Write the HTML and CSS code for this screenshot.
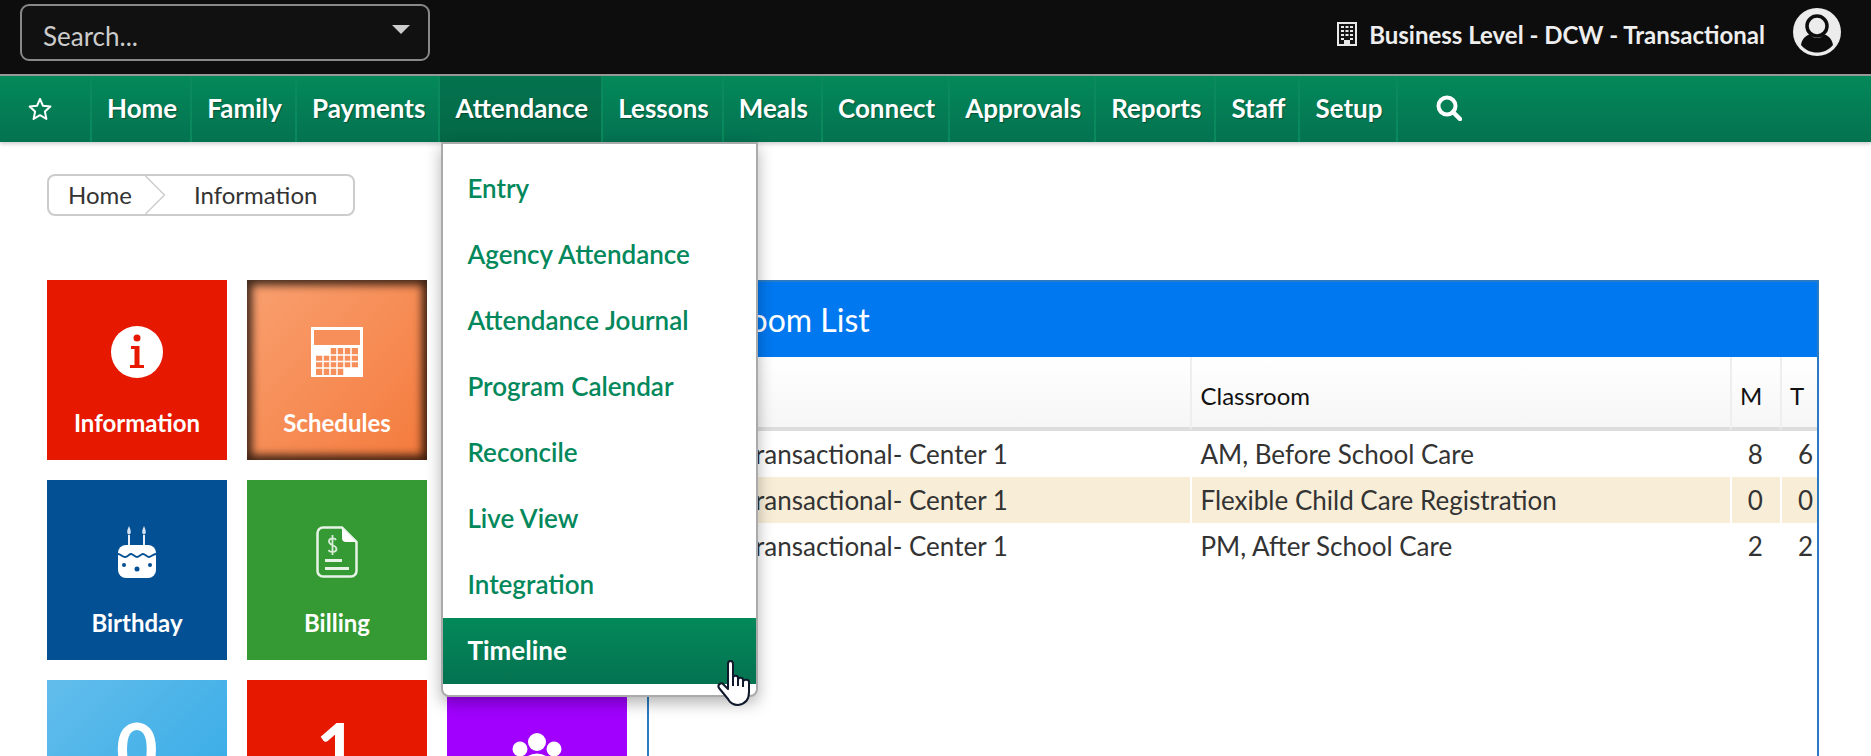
FILE: index.html
```html
<!DOCTYPE html>
<html lang="en">
<head>
<meta charset="utf-8">
<title>Information</title>
<link rel="stylesheet" href="styles.css">
</head>
<body>
<header class="topbar">
  <div class="search"><span>Search...</span><i class="caret"></i></div>
  <div class="account">
    <svg class="building" viewBox="0 0 20 24"><rect x="1" y="1" width="18" height="22" fill="#141414" stroke="#e8e8e8" stroke-width="2"/><g fill="#e8e8e8"><rect x="4" y="4" width="3" height="2"/><rect x="8.500" y="4" width="3" height="2"/><rect x="13" y="4" width="3" height="2"/><rect x="4" y="8" width="3" height="2"/><rect x="8.500" y="8" width="3" height="2"/><rect x="13" y="8" width="3" height="2"/><rect x="4" y="12" width="3" height="2"/><rect x="8.500" y="12" width="3" height="2"/><rect x="13" y="12" width="3" height="2"/><rect x="4" y="16" width="3" height="2"/><rect x="13" y="16" width="3" height="2"/><rect x="7" y="18" width="6" height="5"/></g></svg>
    <span class="biz">Business Level - DCW - Transactional</span>
    <svg class="avatar" viewBox="0 0 48 48"><circle cx="24" cy="24" r="24" fill="#ececec"/><circle cx="24" cy="18" r="10" fill="#ececec" stroke="#0d0d0d" stroke-width="3.500"/><path d="M8 37c1-7 6-10 9-10.500 2 2.500 4.500 3.500 7 3.500s5-1 7-3.500c3 .5 8 3.500 9 10.500-4 5-10 7.500-16 7.500S12 42 8 37z" fill="#0d0d0d"/></svg>
  </div>
</header>
<nav class="nav">
  <a class="nav-item star-item"><svg class="star" viewBox="0 0 24 24"><path d="M12 2l3 6.800 7.400.8-5.500 5 1.500 7.300L12 18.200 5.600 21.900l1.500-7.300-5.500-5 7.400-.8z" fill="none" stroke="#fff" stroke-width="2" stroke-linejoin="round"/></svg></a>
  <a class="nav-item">Home</a>
  <a class="nav-item">Family</a>
  <a class="nav-item">Payments</a>
  <div class="nav-item active">Attendance
    <ul class="menu">
      <li>Entry</li>
      <li>Agency Attendance</li>
      <li>Attendance Journal</li>
      <li>Program Calendar</li>
      <li>Reconcile</li>
      <li>Live View</li>
      <li>Integration</li>
      <li class="hot">Timeline</li>
    </ul>
  </div>
  <a class="nav-item">Lessons</a>
  <a class="nav-item">Meals</a>
  <a class="nav-item">Connect</a>
  <a class="nav-item">Approvals</a>
  <a class="nav-item">Reports</a>
  <a class="nav-item">Staff</a>
  <a class="nav-item">Setup</a>
  <a class="nav-item search-item"><svg class="glass" viewBox="0 0 26 26"><circle cx="11" cy="11" r="8.500" fill="none" stroke="#fff" stroke-width="4"/><path d="M17 17l7 7" stroke="#fff" stroke-width="4.500" stroke-linecap="round"/></svg></a>
</nav>
<main class="content">
  <div class="crumbs">
    <span class="crumb-home">Home</span>
    <svg class="crumb-sep" viewBox="0 0 20 40"><path d="M0 0l20 20L0 40" fill="none" stroke="#ccc" stroke-width="1.500"/></svg>
    <span class="crumb-info">Information</span>
  </div>
  <div class="columns">
    <div class="tiles">
      <div class="tile red">
        <svg class="icon" viewBox="0 0 52 52"><circle cx="26" cy="26" r="26" fill="#fff"/><circle cx="26" cy="12" r="3.500" fill="#e61900"/><path d="M20 20h8.500v19H33v3H19v-3h4.500V23H20z" fill="#e61900"/></svg>
        <span class="label">Information</span>
      </div>
      <div class="tile orange">
        <svg class="icon" viewBox="0 0 52 52"><rect y="1" width="52" height="50" fill="#fff"/><rect x="3" y="4" width="46" height="15" fill="#f78f5a"/><path d="M19 22h28v20H33v7H5V29h14z" fill="#f78f5a"/><path d="M5 29h42M5 35.500h42M5 42h42M12 29v20M19 22v27M26 22v27M33 22v27M40 22v20" fill="none" stroke="#fff" stroke-width="1.500"/></svg>
        <span class="label">Schedules</span>
      </div>
      <div class="tile spacer"></div>
      <div class="tile blue">
        <svg class="icon" viewBox="0 0 40 52"><path d="M12 0c1.300 3 1.800 4.500 1.800 6s-.8 2.500-1.800 2.500-1.800-1-1.800-2.500.5-3 1.800-6zM27 0c1.300 3 1.800 4.500 1.800 6s-.8 2.500-1.800 2.500-1.800-1-1.800-2.500.5-3 1.800-6z" fill="#d5e2ef"/><path d="M11 9h2v11h-2zM26 9h2v11h-2z" fill="#e8eff6"/><rect x="1" y="19" width="38" height="33" rx="8" fill="#fff"/><path d="M1 28c3 0 4 3 7 3s4-3 6-3 4 3 6 3 4-3 6-3 4 3 6 3 4-3 7-3" fill="none" stroke="#045094" stroke-width="1.800"/><circle cx="20" cy="43" r="2.500" fill="#045094"/><circle cx="7" cy="39" r="2" fill="#045094"/><circle cx="33" cy="39" r="2" fill="#045094"/></svg>
        <span class="label">Birthday</span>
      </div>
      <div class="tile green">
        <svg class="icon" viewBox="0 0 42 52"><path d="M26 1.500H7c-3 0-5.500 2.500-5.500 5.500v38c0 3 2.500 5.500 5.500 5.500h28c3 0 5.500-2.500 5.500-5.500V16z" fill="none" stroke="#e8f3e8" stroke-width="2.500"/><path d="M26 2l14 14H30c-2.500 0-4-1.500-4-4z" fill="#fff"/><path d="M20 14c-1-2-7-2.500-7 1.500 0 4.500 7.500 3 7.500 7.500 0 4-7 3.500-8 1M16.500 9v20" fill="none" stroke="#d8ecd8" stroke-width="1.800"/><path d="M9 33h17v3H9zM9 41h24v3H9z" fill="#e8f3e8"/></svg>
        <span class="label">Billing</span>
      </div>
      <div class="tile spacer"></div>
      <div class="tile sky"><span class="count">0</span></div>
      <div class="tile red"><span class="count">1</span></div>
      <div class="tile purple">
        <svg class="paw" viewBox="0 0 52 40"><circle cx="9" cy="16" r="7.500" fill="#fff"/><circle cx="26" cy="9" r="9" fill="#fff"/><circle cx="43" cy="16" r="7.500" fill="#fff"/><ellipse cx="26" cy="32" rx="13" ry="10" fill="none" stroke="#fff" stroke-width="3"/></svg>
      </div>
    </div>
    <section class="panel">
      <h2 class="panel-title">Classroom List</h2>
      <table class="grid">
        <thead>
          <tr><th class="c-center"></th><th class="c-room">Classroom</th><th class="c-day">M</th><th class="c-day">T</th></tr>
        </thead>
        <tbody>
          <tr><td>DCW Transactional- Center 1</td><td>AM, Before School Care</td><td class="num">8</td><td class="num">6</td></tr>
          <tr class="alt"><td>DCW Transactional- Center 1</td><td>Flexible Child Care Registration</td><td class="num">0</td><td class="num">0</td></tr>
          <tr><td>DCW Transactional- Center 1</td><td>PM, After School Care</td><td class="num">2</td><td class="num">2</td></tr>
        </tbody>
      </table>
    </section>
  </div>
</main>
<svg class="cursor" viewBox="0 0 34 46"><path d="M11 4c0-4 5-4 5 0v14c0-3 5-3 5 0v2c0-3 5-3 5 0v2c0-3 6-3 6 0v10c0 7-3 12-11 13-5 0-8-2-10-6L2 28c-2-3 2-6 4-4l5 5z" fill="#fff" stroke="#111a2c" stroke-width="2" stroke-linejoin="round"/><path d="M16 17v9M21 19v7M26 21v6" stroke="#111a2c" stroke-width="2"/></svg>
</body>
</html>
```

FILE: styles.css
```css
* { box-sizing: border-box; }
html, body { margin: 0; height: 756px; overflow: hidden; background: #fff; }
body { font-family: Lato, "Noto Sans", sans-serif; color: #333; position: relative; }

.topbar { height: 76px; background: #0d0d0d; border-bottom: 2px solid #999; display: flex; justify-content: space-between; padding: 4px 30px 0 20px; }
.search { width: 410px; height: 57px; background: #111; border: 2px solid #888; border-radius: 9px; display: flex; align-items: center; justify-content: space-between; padding: 7px 18px 0 21px; color: #ccc; font-size: 26px; }
.caret { width: 0; height: 0; border: 9px solid transparent; border-top: 9px solid #ccc; border-bottom: 0; margin-top: -13px; }
.account { display: flex; align-items: center; height: 56px; color: #eee; }
.building { width: 20px; height: 24px; margin-top: 4px; }
.biz { font-size: 24px; font-weight: 700; margin: 4px 28px 0 12px; }
.avatar { width: 48px; height: 48px; }

.nav { height: 66px; display: flex; background: linear-gradient(#03895a, #047250); box-shadow: 0 2px 4px rgba(0,0,0,.2); color: #fff; font-size: 26px; font-weight: 700; text-shadow: 1px 1px 1px rgba(0,0,0,.35); position: relative; }
.nav-item { display: flex; align-items: center; padding: 0 13px 3px 15px; border-right: 2px solid #0a8a5c; height: 66px; position: relative; }
.star-item { width: 92px; padding: 0 0 0 28px; }
.star { width: 24px; height: 24px; }
.active { background: linear-gradient(#04724e, #046846); }
.search-item { border-right: 0; padding-left: 38px; }
.glass { width: 26px; height: 26px; }

.menu { position: absolute; left: 1px; top: 66px; width: 317px; height: 555px; margin: 0; padding: 12px 0 0; list-style: none; background: #fff; border: 2px solid #aaa; border-radius: 0 0 8px 8px; box-shadow: 0 6px 16px rgba(0,0,0,.3); z-index: 5; color: #03885c; font-size: 26px; font-weight: 600; text-shadow: none; }
.menu li { height: 66px; display: flex; align-items: center; padding: 0 0 3px 24px; }
.menu .hot { background: linear-gradient(#03895a, #047250); color: #fff; font-weight: 700; padding-bottom: 2px; }

.content { padding: 32px 52px 0 47px; }
.crumbs { display: flex; align-items: center; width: 308px; height: 42px; padding-bottom: 1px; border: 2px solid #ccc; border-radius: 8px; font-size: 24px; color: #333; }
.crumb-home { padding-left: 19px; width: 96px; }
.crumb-sep { width: 20px; height: 38px; }
.crumb-info { padding-left: 29px; }

.columns { display: flex; gap: 20px; margin-top: 64px; }
.tiles { display: grid; grid-template-columns: repeat(3, 180px); grid-auto-rows: 180px; gap: 20px; flex: none; }
.tile { display: flex; flex-direction: column; align-items: center; padding-top: 46px; color: #fff; overflow: hidden; }
.red { background: #e61900; }
.orange { background: linear-gradient(135deg, #f9a070, #f47a3c); box-shadow: inset 0 0 8px 5px rgba(0,0,0,.75); }
.blue { background: #045094; }
.green { background: #359a34; }
.sky { background: linear-gradient(135deg, #62bdeb, #2fa8e6); }
.purple { background: #a100ff; padding-top: 53px; }
.spacer { background: transparent; }
.icon { height: 52px; width: 52px; flex: none; }
.label { font-size: 24px; font-weight: 700; line-height: 30px; margin-top: 30px; }
.count { font-size: 72px; font-weight: 700; line-height: 1; margin-top: -14px; }
.paw { width: 52px; height: 40px; }

.panel { flex: 1; min-width: 0; height: 500px; border: 2px solid #2a7bc4; border-bottom: 0; overflow: hidden; }
.panel-title { background: #0078f0; color: #fff; font-size: 32px; font-weight: 400; line-height: 79px; padding-left: 19px; margin: -2px -2px 0; height: 77px; }
.grid { border-collapse: separate; border-spacing: 0; table-layout: fixed; width: 1181px; font-size: 26px; color: #333; }
.grid th { height: 74px; padding: 6px 0 0 8px; text-align: left; font-size: 24px; font-weight: 400; color: #111; background: linear-gradient(#fff, #f6f6f6); border-left: 2px solid #eee; border-bottom: 4px solid #ddd; }
.grid th:first-child, .grid td:first-child { border-left: 0; }
.c-center { width: 541px; }
.c-room { width: 539px; }
.c-day { width: 50px; }
.grid td { height: 46px; padding: 0 0 1px 8px; border-left: 2px solid #fff; white-space: nowrap; overflow: hidden; }
.grid td:first-child { padding-left: 24px; }
.grid .num { text-align: right; padding: 0 17px 1px 0; }
.alt td { background: #f8eed8; }

.cursor { position: absolute; left: 717px; top: 660px; width: 34px; height: 46px; z-index: 9; }
```
